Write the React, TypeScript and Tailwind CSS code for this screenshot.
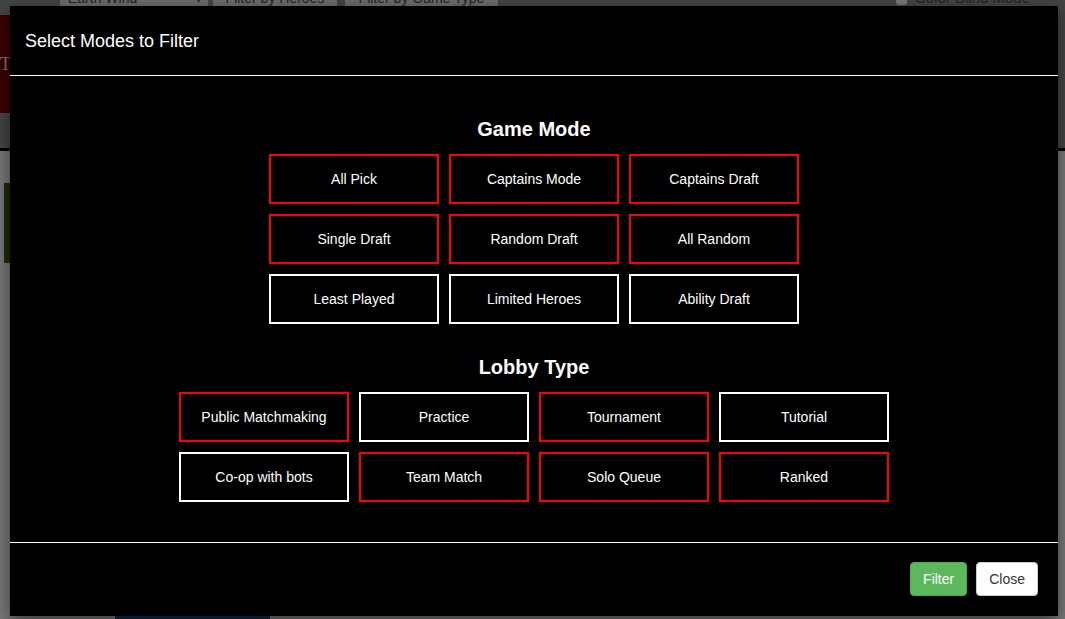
import React from 'react';

const gameModes = [
  { name: 'All Pick', on: true },
  { name: 'Captains Mode', on: true },
  { name: 'Captains Draft', on: true },
  { name: 'Single Draft', on: true },
  { name: 'Random Draft', on: true },
  { name: 'All Random', on: true },
  { name: 'Least Played', on: false },
  { name: 'Limited Heroes', on: false },
  { name: 'Ability Draft', on: false },
];

const lobbyTypes = [
  { name: 'Public Matchmaking', on: true },
  { name: 'Practice', on: false },
  { name: 'Tournament', on: true },
  { name: 'Tutorial', on: false },
  { name: 'Co-op with bots', on: false },
  { name: 'Team Match', on: true },
  { name: 'Solo Queue', on: true },
  { name: 'Ranked', on: true },
];

const ModeButton = ({ name, on }: { name: string; on: boolean }) => (
  <button
    type="button"
    className={`h-[50px] w-[170px] border-2 bg-black text-[14px] text-white ${
      on ? 'border-[#ff0000]' : 'border-white'
    }`}
  >
    {name}
  </button>
);

// the page behind the modal, dimmed
const Backdrop = () => (
  <div className="flex h-full w-full flex-col">
    <div className="flex h-[148px] flex-col bg-[#444444]">
      <div className="flex h-[6px] items-end overflow-hidden pl-[60px] text-[14px] leading-none text-[#222]">
        <div className="flex h-[20px] w-[148px] items-end justify-between bg-[#6b6b6b] pl-[8px] pr-[6px] pb-[1px]">
          <span>Earth Wind</span>
          <span>▾</span>
        </div>
        <div className="ml-[5px] flex h-[20px] w-[124px] items-end justify-center bg-[#6b6b6b] pb-[1px]">
          Filter by Heroes
        </div>
        <div className="ml-[8px] flex h-[20px] w-[153px] items-end justify-center bg-[#6b6b6b] pb-[1px]">
          Filter by Game Type
        </div>
        <div className="ml-auto mr-[35px] flex items-end gap-[8px] pb-[1px]">
          <span className="h-[12px] w-[11px] rounded-[3px] bg-[#777]" />
          <span className="text-[15px] text-[#222]">Color Blind Mode</span>
        </div>
      </div>
      <div className="mt-[9px] flex h-[98px] w-[10px] items-center overflow-hidden bg-[#3a0000] font-['Liberation_Serif',serif] text-[18px] text-[#777]">
        TA
      </div>
    </div>
    <div className="h-[3px] bg-black" />
    <div className="flex flex-1 flex-col bg-[#777777] pt-[32px]">
      <div className="ml-[4px] h-[80px] w-[6px] bg-[#1c2a08]" />
      <div className="mt-auto ml-[115px] h-[3px] w-[155px] bg-[#0b2a4d]" />
    </div>
  </div>
);

export default function App() {
  return (
    <div className="relative h-[619px] w-full overflow-hidden font-['Liberation_Sans',Arial,sans-serif]">
      <Backdrop />
      <div className="absolute left-[10px] top-[6px] flex h-[610px] w-[1048px] flex-col bg-black text-white shadow-[0_5px_15px_rgba(0,0,0,0.5)]">
        <div className="flex h-[70px] items-center border-b border-white px-[15px]">
          <h4 className="text-[18px] leading-[26px]">Select Modes to Filter</h4>
        </div>
        <div className="flex flex-1 flex-col items-center pt-[42px]">
          <h3 className="mb-[14px] text-[20px] font-bold leading-[22px]">Game Mode</h3>
          <div className="grid grid-cols-3 gap-[10px]">
            {gameModes.map((m) => (
              <ModeButton key={m.name} {...m} />
            ))}
          </div>
          <h3 className="mb-[14px] mt-[32px] text-[20px] font-bold leading-[22px]">Lobby Type</h3>
          <div className="grid grid-cols-4 gap-[10px]">
            {lobbyTypes.map((m) => (
              <ModeButton key={m.name} {...m} />
            ))}
          </div>
        </div>
        <div className="flex h-[74px] items-start justify-end gap-[9px] border-t border-white pr-[20px] pt-[19px]">
          <button
            type="button"
            className="h-[34px] rounded-[4px] border border-[#4cae4c] bg-[#5cb85c] px-[12px] text-[14px] leading-[20px] text-white"
          >
            Filter
          </button>
          <button
            type="button"
            className="h-[34px] rounded-[4px] border border-[#cccccc] bg-white px-[12px] text-[14px] leading-[20px] text-[#333]"
          >
            Close
          </button>
        </div>
      </div>
    </div>
  );
}
